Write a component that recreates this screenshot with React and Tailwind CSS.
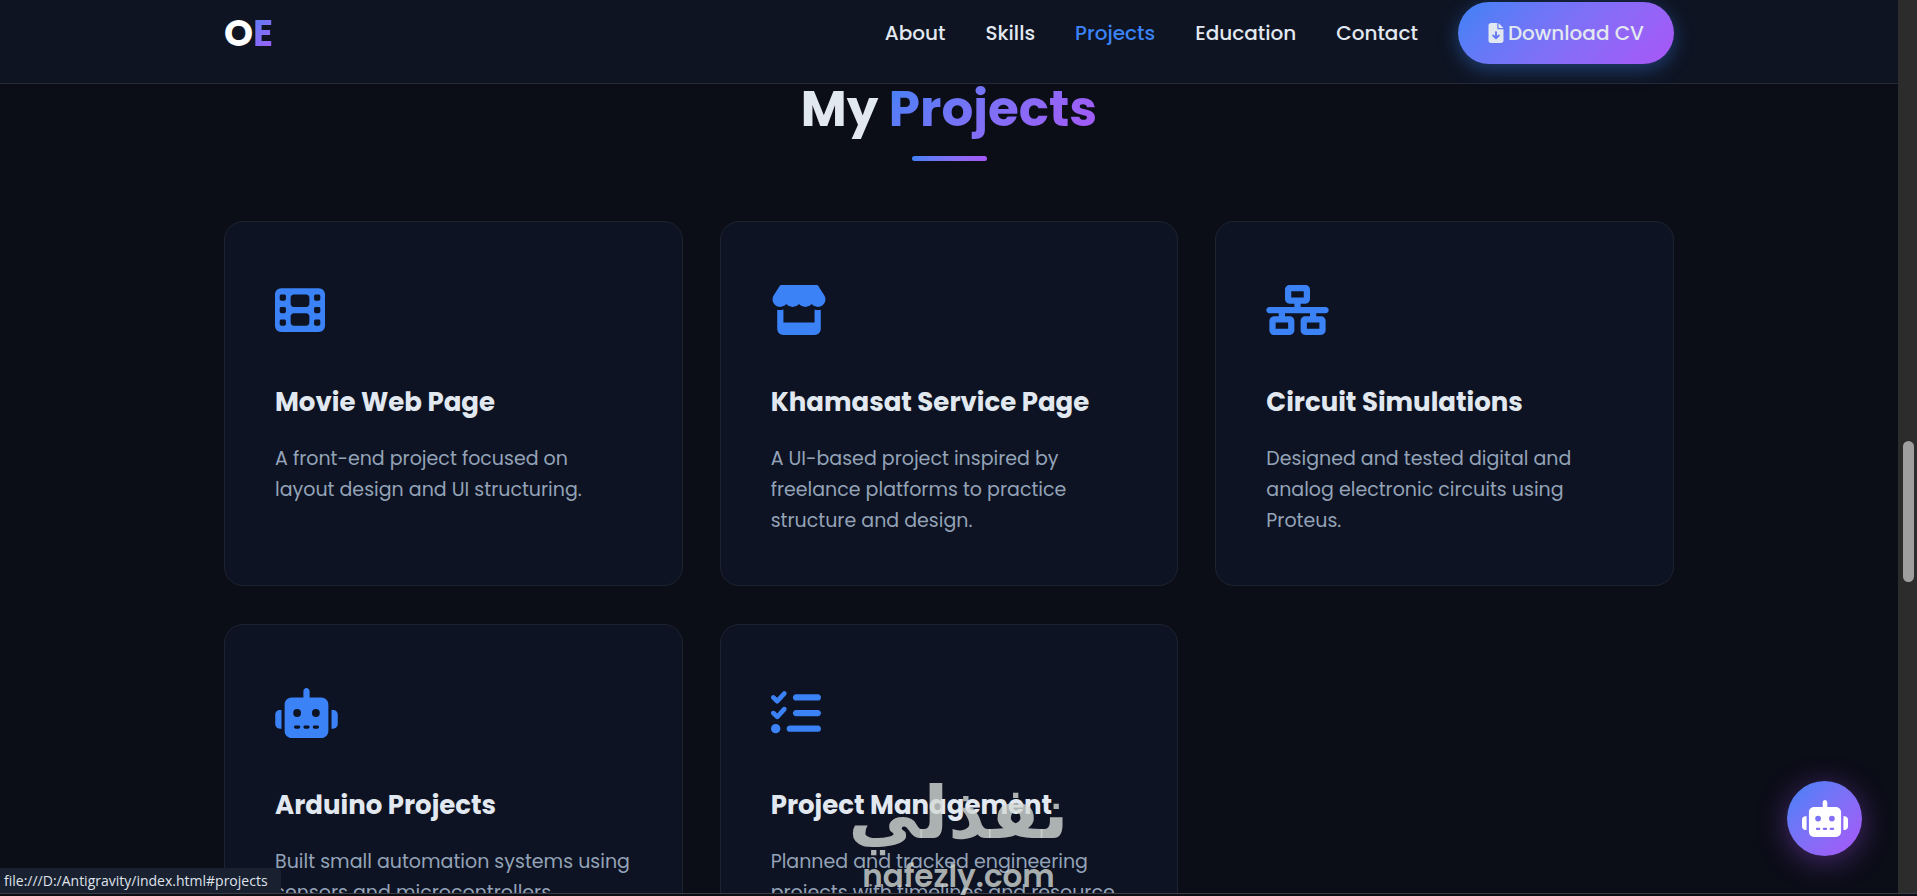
import {
  FaFileArrowDown,
  FaFilm,
  FaListCheck,
  FaNetworkWired,
  FaRobot,
  FaStore,
} from "react-icons/fa6";

const navLinks = ["About", "Skills", "Projects", "Education", "Contact"];

const projects = [
  {
    title: "Movie Web Page",
    description: "A front-end project focused on layout design and UI structuring.",
    icon: <FaFilm className="h-[50px] w-[50px]" />,
  },
  {
    title: "Khamasat Service Page",
    description:
      "A UI-based project inspired by freelance platforms to practice structure and design.",
    icon: <FaStore className="h-[50px] w-[56px]" />,
  },
  {
    title: "Circuit Simulations",
    description:
      "Designed and tested digital and analog electronic circuits using Proteus.",
    icon: <FaNetworkWired className="h-[50px] w-[63px]" />,
  },
  {
    title: "Arduino Projects",
    description:
      "Built small automation systems using sensors and microcontrollers.",
    icon: <FaRobot className="h-[50px] w-[63px]" />,
  },
  {
    title: "Project Management",
    description:
      "Planned and tracked engineering projects with timelines and resource planning.",
    icon: <FaListCheck className="h-[50px] w-[50px]" />,
  },
];

const Header = () => (
  <header className="h-[84px] shrink-0 border-b border-[#232936] bg-[#0e1422]">
    <div className="mx-auto flex h-[66px] max-w-[1500px] items-center justify-between px-[25px]">
      <a href="#home" className="text-[37px] leading-none font-bold text-white">
        O
        <span className="bg-linear-135 from-[#3b82f6] to-[#a855f7] bg-clip-text text-transparent">
          E
        </span>
      </a>
      <nav className="flex items-center gap-10 text-[20px] font-medium text-[#e2e8f0]">
        {navLinks.map((link) => (
          <a
            key={link}
            href={`#${link.toLowerCase()}`}
            className={link === "Projects" ? "text-[#3b82f6]" : "hover:text-[#3b82f6]"}
          >
            {link}
          </a>
        ))}
        <a
          href="#cv"
          className="flex h-[62px] items-center gap-1 rounded-full bg-linear-135 from-[#3b82f6] to-[#a855f7] px-[30px] shadow-[0_5px_19px_rgba(59,130,246,0.4)]"
        >
          <FaFileArrowDown className="h-5 w-4" />
          Download CV
        </a>
      </nav>
    </div>
  </header>
);

const ProjectCard = ({ project }) => (
  <article className="rounded-[19px] border border-[#1d2430] bg-[#0d1322] px-[50px] py-[49px]">
    <div className="mb-[33px] flex h-[78px] items-center text-[#3b82f6]">{project.icon}</div>
    <h3 className="mb-5 text-[26px] leading-[41px] font-bold whitespace-nowrap text-[#e2e8f0]">
      {project.title}
    </h3>
    <p className="text-[19px] leading-[31px] text-[#94a3b8]">{project.description}</p>
  </article>
);

// Thin native-looking scrollbar on the right edge
const ScrollTrack = () => (
  <div className="relative w-[19px] shrink-0 bg-[#2c2c2c]">
    <div className="absolute top-[441px] right-[3px] h-[141px] w-[11px] rounded-full bg-[#9f9f9f]" />
    <svg className="absolute right-[3px] bottom-[3px] h-[10px] w-3" viewBox="0 0 12 10">
      <path d="M1 0h10q1.400.8 1.300L7 9.300q-1 1.100-2 0L.200 1.300Q-.400 0 1 0Z" fill="#9f9f9f" />
    </svg>
  </div>
);

const App = () => (
  <div className="flex h-screen flex-col overflow-hidden bg-[#0b0d17] font-['Poppins','Inter',sans-serif]">
    <div className="flex min-h-0 flex-1">
      <div className="relative flex min-w-0 flex-1 flex-col overflow-hidden">
        <Header />

        <main className="mx-auto w-full max-w-[1500px] px-[25px]">
          <h2 className="text-center text-[50px] leading-[50px] font-bold text-[#e2e8f0]">
            My{" "}
            <span className="bg-linear-135 from-[#3b82f6] to-[#a855f7] bg-clip-text text-transparent">
              Projects
            </span>
          </h2>
          <div className="mx-auto mt-[22px] mb-[60px] h-[5px] w-[75px] rounded-full bg-linear-135 from-[#3b82f6] to-[#a855f7]" />

          <div className="grid grid-cols-3 gap-x-[37px] gap-y-[38px]">
            {projects.map((project) => (
              <ProjectCard key={project.title} project={project} />
            ))}
          </div>
        </main>

        <button
          type="button"
          aria-label="Open chat"
          className="absolute right-9 bottom-[37px] flex size-[75px] items-center justify-center rounded-full bg-linear-135 from-[#3b82f6] to-[#a855f7] text-white shadow-[0_5px_30px_rgba(168,85,247,0.4)]"
        >
          <FaRobot className="h-[37px] w-[46px]" />
        </button>

        <div className="absolute bottom-0 left-0 flex h-[25px] w-[281px] items-center rounded-tr bg-[#192030] px-1 font-['Open_Sans',sans-serif] text-[14px] whitespace-nowrap text-[#dfe3ea]">
          file:///D:/Antigravity/index.html#projects
        </div>
      </div>
      <ScrollTrack />
    </div>
    <div className="h-[3px] shrink-0 border-t border-[#3d3d44] bg-[#0c0d14]" />

    {/* Watermark */}
    <div className="pointer-events-none absolute inset-x-0 bottom-0 flex flex-col items-center text-[#d4d9d6]/80">
      <span dir="rtl" lang="ar" className="font-['DejaVu_Sans',sans-serif] text-[72px] leading-[86px] font-bold">
        نفذلي
      </span>
      <span className="text-[31px] leading-[40px] font-semibold">nafezly.com</span>
    </div>
  </div>
);

export default App;
